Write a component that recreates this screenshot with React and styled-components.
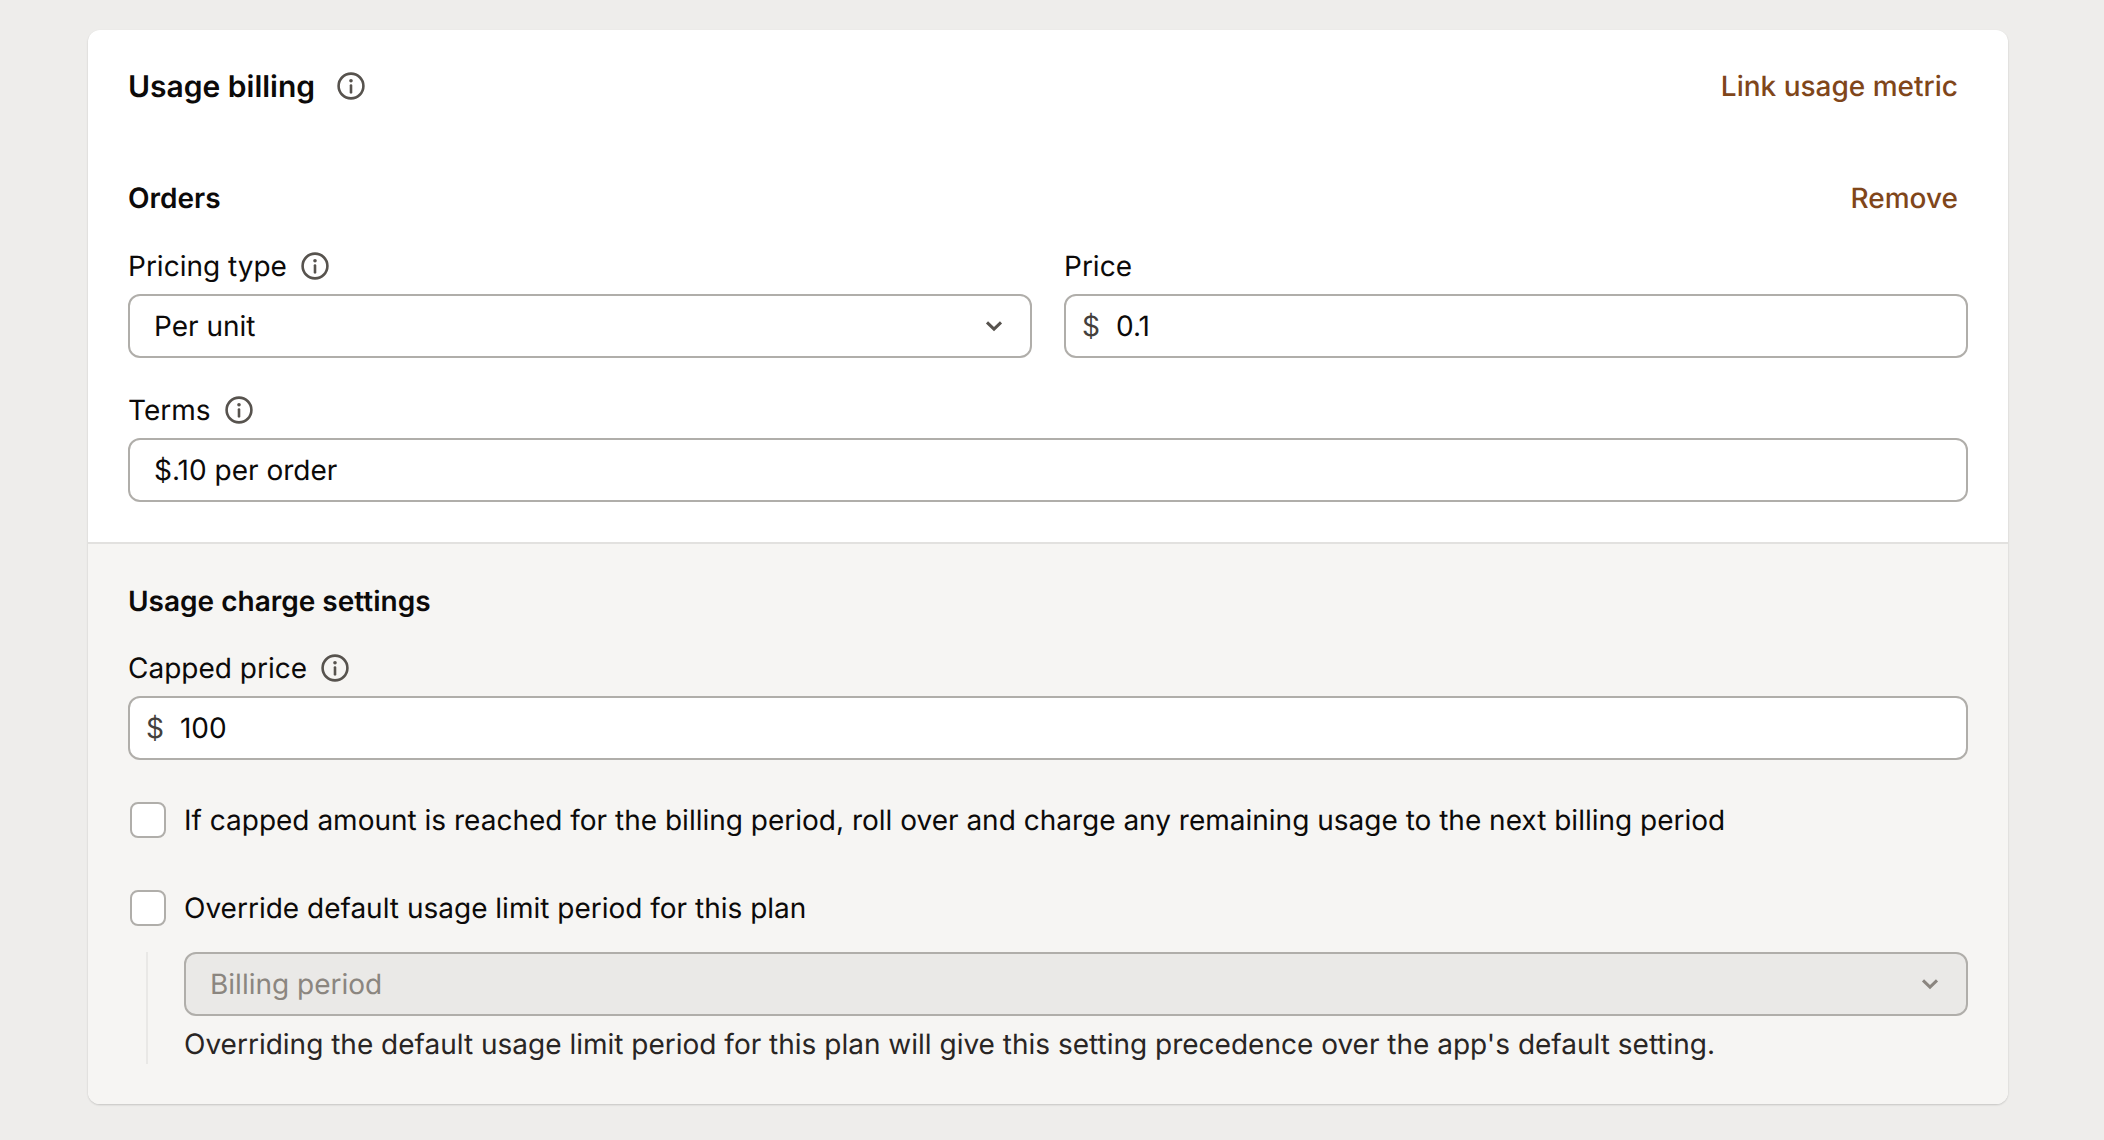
import styled, { createGlobalStyle } from 'styled-components';

const GlobalStyle = createGlobalStyle`
  html, body {
    margin: 0;
    padding: 0;
    background: #eeedeb;
    font-family: Inter, "Noto Sans", sans-serif;
    color: #0c0a09;
    text-rendering: geometricPrecision;
  }
`;

function InfoIcon() {
  return (
    <IconSvg width="28" height="28" viewBox="0 0 28 28" fill="none">
      <circle cx="14" cy="14" r="12.4" stroke="#57534e" strokeWidth="2.6" />
      <circle cx="14" cy="8.8" r="1.8" fill="#57534e" />
      <rect x="12.7" y="12.2" width="2.6" height="9.4" rx="1.2" fill="#57534e" />
    </IconSvg>
  );
}

function Chevron({ muted }) {
  return (
    <ChevronSvg width="18" height="12" viewBox="0 0 18 12" fill="none">
      <path
        d="M2 2.4 L9 9.2 L16 2.4"
        stroke={muted ? '#8b8680' : '#57534e'}
        strokeWidth="3"
      />
    </ChevronSvg>
  );
}

export default function App() {
  return (
    <>
      <GlobalStyle />
      <Page>
        <Card>
          <TopSection>
            <HeaderRow>
              <CardTitle>
                <TitleText>Usage billing</TitleText>
                <InfoIcon />
              </CardTitle>
              <LinkButton>Link usage metric</LinkButton>
            </HeaderRow>
            <MetricRow>
              <SubTitle>Orders</SubTitle>
              <LinkButton>Remove</LinkButton>
            </MetricRow>
            <TwoCols>
              <Field>
                <Label>
                  Pricing type
                  <InfoIcon />
                </Label>
                <InputBox>
                  <span>Per unit</span>
                  <Chevron />
                </InputBox>
              </Field>
              <Field>
                <Label>Price</Label>
                <InputBox $prefixed>
                  <Prefix>$</Prefix>
                  <span>0.1</span>
                </InputBox>
              </Field>
            </TwoCols>
            <Field>
              <Label>
                Terms
                <InfoIcon />
              </Label>
              <InputBox>
                <span>$.10 per order</span>
              </InputBox>
            </Field>
          </TopSection>
          <BottomSection>
            <SubTitle>Usage charge settings</SubTitle>
            <CappedField>
              <Label>
                Capped price
                <InfoIcon />
              </Label>
              <InputBox $prefixed>
                <Prefix>$</Prefix>
                <span>100</span>
              </InputBox>
            </CappedField>
            <CheckRow>
              <CheckBox />
              If capped amount is reached for the billing period, roll over and charge any remaining usage to the next billing period
            </CheckRow>
            <CheckRow $gap={52}>
              <CheckBox />
              Override default usage limit period for this plan
            </CheckRow>
            <Nested>
              <InputBox $disabled>
                <span>Billing period</span>
                <Chevron muted />
              </InputBox>
              <HelpText>
                Overriding the default usage limit period for this plan will give this setting precedence over the app's default setting.
              </HelpText>
            </Nested>
          </BottomSection>
        </Card>
      </Page>
    </>
  );
}

const Page = styled.div`
  width: 2104px;
  height: 1140px;
  padding: 30px 96px 0 88px;
  box-sizing: border-box;
`;

const Card = styled.div`
  background: #fff;
  border-radius: 12px;
  overflow: hidden;
  box-shadow: 0 1px 2px rgba(12, 10, 9, 0.18);
`;

const TopSection = styled.div`
  padding: 38px 40px 40px;
  display: flex;
  flex-direction: column;
  border-bottom: 2px solid #e2e1df;
`;

const BottomSection = styled.div`
  padding: 39px 40px 40px;
  background: #f6f5f3;
  display: flex;
  flex-direction: column;
`;

const HeaderRow = styled.div`
  display: flex;
  justify-content: space-between;
  align-items: center;
  padding-right: 10px;
  height: 36px;
  margin-bottom: 76px;
`;

const MetricRow = styled(HeaderRow)`
  margin-bottom: 32px;
`;

const CardTitle = styled.div`
  display: flex;
  align-items: center;
  gap: 22px;
  font-size: 30px;
  font-weight: 600;
  line-height: 36px;
`;

const TitleText = styled.span`
  margin-top: 2px;
`;

const SubTitle = styled.div`
  font-size: 28px;
  font-weight: 600;
  line-height: 36px;
`;

const LinkButton = styled.div`
  font-size: 28px;
  font-weight: 500;
  line-height: 36px;
  color: #80461a;
`;

const TwoCols = styled.div`
  display: grid;
  grid-template-columns: 1fr 1fr;
  gap: 32px;
  margin-bottom: 34px;
`;

const Field = styled.div`
  display: flex;
  flex-direction: column;
  gap: 10px;
`;

const CappedField = styled(Field)`
  margin-top: 31px;
`;

const Label = styled.div`
  display: flex;
  align-items: center;
  gap: 14px;
  height: 36px;
  font-size: 28px;
  line-height: 36px;
`;

const InputBox = styled.div`
  height: 64px;
  box-sizing: border-box;
  display: flex;
  align-items: center;
  justify-content: ${(p) => (p.$disabled || !p.$prefixed ? 'space-between' : 'flex-start')};
  gap: 16px;
  padding: 0 ${(p) => (p.$prefixed ? '16px' : '24px')};
  background: ${(p) => (p.$disabled ? '#eae9e7' : '#fff')};
  color: ${(p) => (p.$disabled ? '#8b8680' : '#0c0a09')};
  border: 2px solid #b0aeaa;
  border-radius: 12px;
  font-size: 28px;
`;

const Prefix = styled.span`
  color: #44403c;
`;

const IconSvg = styled.svg`
  flex: none;
`;

const ChevronSvg = styled.svg`
  flex: none;
  margin-right: 3px;
`;

const CheckRow = styled.div`
  display: flex;
  align-items: center;
  gap: 18px;
  margin-top: ${(p) => p.$gap || 42}px;
  padding-left: 2px;
  font-size: 28px;
  line-height: 36px;
`;

const CheckBox = styled.div`
  width: 36px;
  height: 36px;
  box-sizing: border-box;
  flex: none;
  background: #fff;
  border: 2px solid #b0aeaa;
  border-radius: 8px;
`;

const Nested = styled.div`
  margin: 26px 0 0 18px;
  padding: 0 0 2px 36px;
  border-left: 2px solid #e9e8e6;
  display: flex;
  flex-direction: column;
  gap: 10px;
`;

const HelpText = styled.div`
  font-size: 28px;
  line-height: 36px;
  color: #292524;
`;
